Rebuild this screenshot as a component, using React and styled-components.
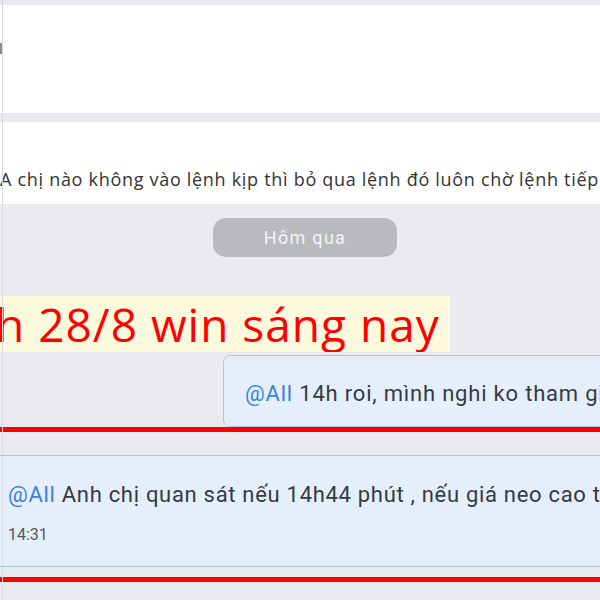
import React from 'react';
import styled, { createGlobalStyle } from 'styled-components';

const GlobalStyle = createGlobalStyle`
  html, body {
    margin: 0;
    padding: 0;
    background: #eaebef;
    overflow: hidden;
  }
  #root {
    width: 600px;
    height: 600px;
    overflow: hidden;
  }
`;

const Page = styled.div`
  width: 600px;
  height: 600px;
  overflow: hidden;
  background: #eaebef;
  display: flex;
  flex-direction: column;
  position: relative;
  &::before {
    content: '';
    position: absolute;
    left: 2px;
    top: 0;
    bottom: 0;
    width: 1px;
    background: #d9dade;
    z-index: 2;
  }
`;

const Strip = styled.div`
  height: ${(p) => p.h}px;
  flex-shrink: 0;
  background: #e8e9ec;
`;

const InputPanel = styled.div`
  height: 108px;
  flex-shrink: 0;
  background: #fff;
  display: flex;
  align-items: center;
`;

const Caret = styled.span`
  display: block;
  width: 2px;
  height: 11px;
  margin-top: -21px;
  background: #8a8b8f;
`;

const PinnedPanel = styled.div`
  height: 82px;
  flex-shrink: 0;
  background: #fff;
  box-sizing: border-box;
  padding-top: 45px;
  font-family: 'Open Sans', 'Noto Sans', sans-serif;
  font-size: 18px;
  line-height: 24px;
  letter-spacing: 0.7px;
  color: #333;
  white-space: nowrap;
  overflow: hidden;
`;

const ChatArea = styled.div`
  flex: 1;
  display: flex;
  flex-direction: column;
  padding-top: 14px;
  overflow: hidden;
`;

const DatePill = styled.div`
  align-self: flex-start;
  margin-left: 213px;
  width: 184px;
  height: 39px;
  border-radius: 13px;
  background: #b9babe;
  color: #f3f3f5;
  font-family: Roboto, 'Liberation Sans', sans-serif;
  font-size: 18px;
  letter-spacing: 1.3px;
  display: flex;
  align-items: center;
  justify-content: center;
`;

const Highlight = styled.div`
  align-self: flex-start;
  margin-top: 39px;
  height: 56px;
  background: #fcf9dc;
  color: #ff0000;
  font-family: 'Open Sans', 'Noto Sans', sans-serif;
  font-size: 46px;
  letter-spacing: 1px;
  line-height: 56px;
  padding-right: 10px;
  white-space: nowrap;
  overflow: hidden;
`;

const Clip = styled.span`
  margin-left: -4px;
`;

const Bubble = styled.div`
  box-sizing: border-box;
  margin-top: ${(p) => p.top}px;
  margin-left: ${(p) => p.left}px;
  width: ${(p) => 600 - p.left + 20}px;
  height: ${(p) => p.h}px;
  flex-shrink: 0;
  background: #e5effc;
  border: 1px solid #a8c5ee;
  border-radius: ${(p) => (p.round ? '7px 0 0 7px' : '0')};
  padding-left: ${(p) => p.pad}px;
  padding-top: ${(p) => p.padTop}px;
  font-family: Roboto, 'Liberation Sans', sans-serif;
  color: #363a42;
  white-space: nowrap;
  overflow: hidden;
`;

const MessageText = styled.div`
  font-size: 22px;
  line-height: 26px;
  letter-spacing: ${(p) => p.spacing || 0}px;
`;

const Mention = styled.span`
  color: #3c82dc;
`;

const Time = styled.div`
  margin-top: 17px;
  font-size: 16px;
  letter-spacing: 0;
  color: #555;
`;

const RedRule = styled.div`
  height: 5px;
  flex-shrink: 0;
  margin-top: ${(p) => p.top}px;
  background: #ff0000;
  position: relative;
  z-index: 1;
`;

export default function App() {
  return (
    <>
      <GlobalStyle />
      <Page>
        <Strip h={5} />
        <InputPanel>
          <Caret />
        </InputPanel>
        <Strip h={9} />
        <PinnedPanel>
          A chị nào không vào lệnh kịp thì bỏ qua lệnh đó luôn chờ lệnh tiếp theo
        </PinnedPanel>
        <ChatArea>
          <DatePill>Hôm qua</DatePill>
          <Highlight>
            <Clip>h 28/8 win sáng nay</Clip>
          </Highlight>
          <Bubble top={3} left={223} h={72} pad={21} padTop={25} round>
            <MessageText spacing={0.8}>
              <Mention>@All</Mention> 14h roi, mình nghi ko tham gia lệnh chiều nay
            </MessageText>
          </Bubble>
          <RedRule top={0} />
          <Bubble top={23} left={-10} h={112} pad={17} padTop={26}>
            <MessageText spacing={0.7}>
              <Mention>@All</Mention> Anh chị quan sát nếu 14h44 phút , nếu giá neo cao thì vào lệnh
            </MessageText>
            <Time>14:31</Time>
          </Bubble>
          <RedRule top={10} />
        </ChatArea>
      </Page>
    </>
  );
}
